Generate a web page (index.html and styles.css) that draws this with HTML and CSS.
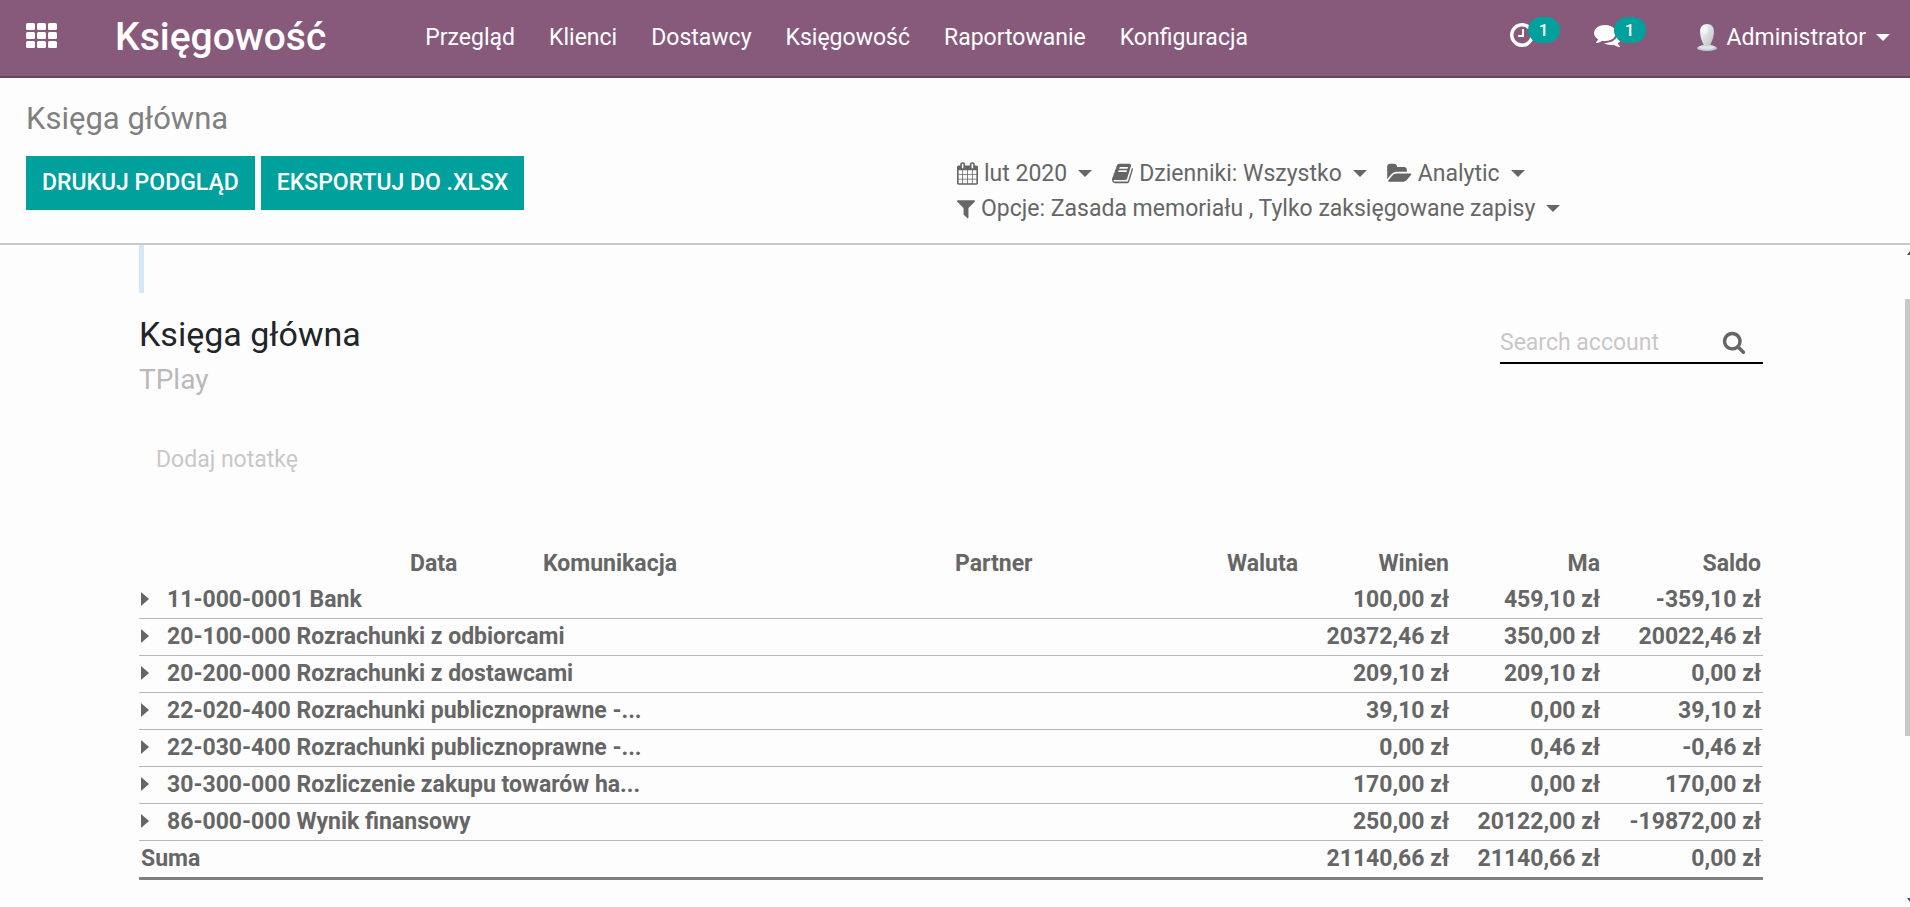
FILE: index.html
```html
<!DOCTYPE html>
<html lang="pl">
<head>
<meta charset="utf-8">
<title>Księga główna</title>
<link rel="stylesheet" href="styles.css">
</head>
<body>
<header class="navbar">
  <button class="apps" type="button" aria-label="Aplikacje">
    <svg width="32" height="32" viewBox="0 0 32 32" fill="currentColor" aria-hidden="true">
      <rect x="0" y="2" width="9" height="7" rx="1.5"/><rect x="11" y="2" width="9" height="7" rx="1.5"/><rect x="22" y="2" width="9" height="7" rx="1.5"/>
      <rect x="0" y="11" width="9" height="7" rx="1.5"/><rect x="11" y="11" width="9" height="7" rx="1.5"/><rect x="22" y="11" width="9" height="7" rx="1.5"/>
      <rect x="0" y="20" width="9" height="7" rx="1.5"/><rect x="11" y="20" width="9" height="7" rx="1.5"/><rect x="22" y="20" width="9" height="7" rx="1.5"/>
    </svg>
  </button>
  <a class="brand" href="#">Księgowość</a>
  <nav class="menu">
    <a href="#">Przegląd</a>
    <a href="#">Klienci</a>
    <a href="#">Dostawcy</a>
    <a href="#">Księgowość</a>
    <a href="#">Raportowanie</a>
    <a href="#">Konfiguracja</a>
  </nav>
  <div class="systray">
    <button class="tray" type="button" aria-label="Aktywności">
      <svg width="28" height="28" viewBox="0 0 1792 1792" fill="currentColor" aria-hidden="true"><path d="M1024 544v448q0 14-9 23t-23 9h-320q-14 0-23-9t-9-23v-64q0-14 9-23t23-9h224v-352q0-14 9-23t23-9h64q14 0 23 9t9 23zm416 352q0-148-73-273t-198-198-273-73-273 73-198 198-73 273 73 273 198 198 273 73 273-73 198-198 73-273zm224 0q0 209-103 385.5t-279.5 279.5-385.5 103-385.5-103-279.5-279.5-103-385.5 103-385.5 279.5-279.5 385.5-103 385.5 103 279.5 279.5 103 385.5z"/></svg>
      <span class="badge">1</span>
    </button>
    <button class="tray" type="button" aria-label="Wiadomości">
      <svg width="28" height="28" viewBox="0 0 1792 1792" fill="currentColor" aria-hidden="true"><path d="M1408 768q0 139-94 257t-256.5 186.5-353.5 68.5q-86 0-176-16-124 88-278 128-36 9-86 16h-3q-11 0-20.5-8t-11.5-21q-1-3-1-6.5t.5-6.5 2-6l2.5-5 3.5-5.5 4-5 4.5-5 4-4.5q5-6 23-25t26-29.5 22.5-29 25-38.5 20.5-44q-124-72-195-177t-71-224q0-139 94-257t256.5-186.5 353.5-68.5 353.5 68.5 256.5 186.5 94 257zm384 256q0 120-71 224.5t-195 176.5q10 24 20.5 44t25 38.5 22.5 29 26 29.5 23 25q1 1 4 4.5t4.5 5 4 5 3.5 5.5l2.5 5 2 6 .5 6.5-1 6.5q-3 14-13 22t-22 7q-50-7-86-16-154-40-278-128-90 16-176 16-271 0-472-132 58 4 88 4 161 0 309-45t264-129q125-92 192-212t67-254q0-77-23-152 129 71 204 178t75 230z"/></svg>
      <span class="badge">1</span>
    </button>
    <button class="user" type="button">
      <svg width="20" height="28" viewBox="0 0 20 28" aria-hidden="true">
        <defs>
          <linearGradient id="head" x1="0" y1="0" x2="1" y2="1"><stop offset="0" stop-color="#fafafa"/><stop offset="0.5" stop-color="#dcdfe2"/><stop offset="1" stop-color="#b9b9b9"/></linearGradient>
        </defs>
        <ellipse cx="10" cy="25" rx="10" ry="3" fill="#c3cdd2"/>
        <ellipse cx="10" cy="24" rx="8" ry="2" fill="#dde3e6"/>
        <path d="M10 1C14.500 1 17 4 17 8.500C17 13 15.500 17 14 20.500C13 24 7 24 6 20.500C4.500 17 3 13 3 8.500C3 4 5.500 1 10 1z" fill="url(#head)"/>
        <ellipse cx="8" cy="7" rx="3" ry="4" fill="#fff" opacity="0.600"/>
      </svg>
      <span>Administrator</span>
      <span class="caret"></span>
    </button>
  </div>
</header>

<section class="control-panel">
  <h1 class="breadcrumb">Księga główna</h1>
  <div class="actions">
    <div class="buttons">
      <button class="btn" type="button">DRUKUJ PODGLĄD</button>
      <button class="btn" type="button">EKSPORTUJ DO .XLSX</button>
    </div>
    <div class="filters">
      <button class="filter" type="button">
        <svg width="21" height="23" viewBox="64 0 1664 1792" fill="currentColor" aria-hidden="true"><path d="M192 1664h288v-288h-288v288zm352 0h320v-288h-320v288zm-352-352h288v-320h-288v320zm352 0h320v-320h-320v320zm-352-384h288v-288h-288v288zm736 736h320v-288h-320v288zm-384-736h320v-288h-320v288zm768 736h288v-288h-288v288zm-384-352h320v-320h-320v320zm-352-864v-288q0-13-9.500-22.500t-22.500-9.500h-64q-13 0-22.500 9.500t-9.500 22.500v288q0 13 9.500 22.500t22.500 9.500h64q13 0 22.500-9.500t9.500-22.500zm736 864h288v-320h-288v320zm-384-384h320v-288h-320v288zm384 0h288v-288h-288v288zm32-480v-288q0-13-9.500-22.500t-22.500-9.500h-64q-13 0-22.500 9.500t-9.500 22.500v288q0 13 9.500 22.500t22.500 9.500h64q13 0 22.500-9.500t9.500-22.500zm384-64v1280q0 52-38 90t-90 38h-1408q-52 0-90-38t-38-90v-1280q0-52 38-90t90-38h128v-96q0-66 47-113t113-47h64q66 0 113 47t47 113v96h384v-96q0-66 47-113t113-47h64q66 0 113 47t47 113v96h128q52 0 90 38t38 90z"/></svg>
        <span>lut 2020</span><span class="caret"></span>
      </button>
      <button class="filter" type="button">
        <svg width="21" height="23" viewBox="64 0 1664 1792" fill="currentColor" aria-hidden="true"><path d="M1703 478q40 57 18 129l-275 906q-19 64-76.500 107.500t-122.500 43.500h-923q-77 0-148.500-53.500t-99.500-131.500q-24-67-2-127 0-4 3-27t4-37q1-8-3-21.500t-3-19.500q2-11 8-21t16.500-23.500 16.500-23.500q23-38 45-91.500t30-91.500q3-10 .5-30t-.5-28q3-11 17-28t17-23q21-36 42-92t25-90q1-9-2.500-32t.5-28q4-13 22-30.500t22-22.500q19-26 42.500-84.500t27.500-96.500q1-8-3-25.500t-2-26.500q2-8 9-18t18-23 17-21q8-12 16.500-30.500t15-35 16-36 19.500-32 26.500-23.500 36-11.500 47.500 5.500l-1 3q38-9 51-9h761q74 0 114 56t18 130l-274 906q-36 119-71.500 153.500t-128.500 34.500h-869q-27 0-38 15-11 16-1 43 24 70 144 70h923q29 0 56-15.500t35-41.500l300-987q7-22 5-57 38 15 59 43zm-1064 2q-4 13 2 22.500t20 9.500h608q13 0 25.500-9.500t16.500-22.500l21-64q4-13-2-22.500t-20-9.500h-608q-13 0-25.500 9.500t-16.500 22.500zm-83 256q-4 13 2 22.500t20 9.500h608q13 0 25.500-9.500t16.500-22.500l21-64q4-13-2-22.500t-20-9.500h-608q-13 0-25.500 9.500t-16.500 22.500z"/></svg>
        <span>Dzienniki: Wszystko</span><span class="caret"></span>
      </button>
      <button class="filter" type="button">
        <svg width="25" height="23" viewBox="0 0 1920 1792" fill="currentColor" aria-hidden="true"><path d="M1879 952q0 31-31 66l-336 396q-43 51-120.500 86.500t-143.500 35.500h-1088q-34 0-60.500-13t-26.500-43q0-31 31-66l336-396q43-51 120.500-86.500t143.500-35.500h1088q34 0 60.500 13t26.500 43zm-343-344v160h-832q-94 0-197 47.500t-164 119.500l-337 396-5 6q0-4-.5-12.500t-.5-12.500v-960q0-92 66-158t158-66h320q92 0 158 66t66 158v32h544q92 0 158 66t66 158z"/></svg>
        <span>Analytic</span><span class="caret"></span>
      </button>
      <button class="filter" type="button">
        <svg width="18" height="23" viewBox="192 0 1408 1792" fill="currentColor" aria-hidden="true"><path d="M1595 295q17 41-14 70l-493 493v742q0 42-39 59-13 5-25 5-27 0-45-19l-256-256q-19-19-19-45v-486l-493-493q-31-29-14-70 17-39 59-39h1280q42 0 59 39z"/></svg>
        <span>Opcje: Zasada memoriału , Tylko zaksięgowane zapisy</span><span class="caret"></span>
      </button>
    </div>
  </div>
</section>

<div class="content">
  <main class="report">
    <div class="summary-mark"></div>
    <div class="report-head">
      <div>
        <h2 class="report-title">Księga główna</h2>
        <h3 class="company">TPlay</h3>
      </div>
      <div class="search">
        <input class="search-input" type="text" placeholder="Search account" aria-label="Search account">
        <svg width="24" height="24" viewBox="0 0 1792 1792" fill="currentColor" aria-hidden="true"><path d="M1216 832q0-185-131.500-316.500t-316.500-131.500-316.500 131.500-131.500 316.500 131.500 316.500 316.500 131.500 316.500-131.500 131.500-316.500zm512 832q0 52-38 90t-90 38q-54 0-90-38l-343-342q-179 124-399 124-143 0-273.500-55.500t-225-150-150-225-55.500-273.500 55.500-273.500 150-225 225-150 273.500-55.500 273.500 55.500 225 150 150 225 55.500 273.500q0 220-124 399l343 343q37 37 37 90z"/></svg>
      </div>
    </div>
    <button class="note" type="button">Dodaj notatkę</button>
    <table class="ledger">
      <colgroup>
        <col class="c-name"><col class="c-date"><col class="c-comm"><col class="c-partner"><col class="c-currency"><col class="c-amount"><col class="c-amount"><col class="c-balance">
      </colgroup>
      <thead>
        <tr><td></td><th scope="col">Data</th><th scope="col">Komunikacja</th><th scope="col">Partner</th><th scope="col" class="num">Waluta</th><th scope="col" class="num">Winien</th><th scope="col" class="num">Ma</th><th scope="col" class="num">Saldo</th></tr>
      </thead>
      <tbody>
        <tr><th scope="row" colspan="5"><span class="unfold"></span>11-000-0001 Bank</th><td class="num">100,00 zł</td><td class="num">459,10 zł</td><td class="num">-359,10 zł</td></tr>
        <tr><th scope="row" colspan="5"><span class="unfold"></span>20-100-000 Rozrachunki z odbiorcami</th><td class="num">20372,46 zł</td><td class="num">350,00 zł</td><td class="num">20022,46 zł</td></tr>
        <tr><th scope="row" colspan="5"><span class="unfold"></span>20-200-000 Rozrachunki z dostawcami</th><td class="num">209,10 zł</td><td class="num">209,10 zł</td><td class="num">0,00 zł</td></tr>
        <tr><th scope="row" colspan="5"><span class="unfold"></span>22-020-400 Rozrachunki publicznoprawne -...</th><td class="num">39,10 zł</td><td class="num">0,00 zł</td><td class="num">39,10 zł</td></tr>
        <tr><th scope="row" colspan="5"><span class="unfold"></span>22-030-400 Rozrachunki publicznoprawne -...</th><td class="num">0,00 zł</td><td class="num">0,46 zł</td><td class="num">-0,46 zł</td></tr>
        <tr><th scope="row" colspan="5"><span class="unfold"></span>30-300-000 Rozliczenie zakupu towarów ha...</th><td class="num">170,00 zł</td><td class="num">0,00 zł</td><td class="num">170,00 zł</td></tr>
        <tr><th scope="row" colspan="5"><span class="unfold"></span>86-000-000 Wynik finansowy</th><td class="num">250,00 zł</td><td class="num">20122,00 zł</td><td class="num">-19872,00 zł</td></tr>
      </tbody>
      <tfoot>
        <tr><th scope="row" colspan="5">Suma</th><td class="num">21140,66 zł</td><td class="num">21140,66 zł</td><td class="num">0,00 zł</td></tr>
      </tfoot>
    </table>
  </main>
  <div class="scrollbar" aria-hidden="true">
    <svg class="arrow" width="5" height="4" viewBox="0 0 5 4"><path d="M2 4L5 0V4z" fill="#505050"/></svg>
    <div class="track"><div class="thumb"></div></div>
    <svg class="arrow" width="5" height="4" viewBox="0 0 5 4"><path d="M2 0H5V4z" fill="#505050"/></svg>
  </div>
</div>
</body>
</html>
```
FILE: styles.css
```css
* {
  box-sizing: border-box;
}

body {
  margin: 0;
  height: 100vh;
  display: flex;
  flex-direction: column;
  overflow: hidden;
  background: #fdfdfd;
  color: #666;
  font-family: Roboto, "Liberation Sans", sans-serif;
  font-size: 23px;
  line-height: 35px;
}

button,
input {
  margin: 0;
  padding: 0;
  border: 0;
  background: none;
  color: inherit;
  font: inherit;
}

a {
  color: inherit;
  text-decoration: none;
}

svg {
  display: block;
  flex: none;
}

h1,
h2,
h3 {
  margin: 0;
  font-weight: 400;
}

.navbar {
  flex: none;
  display: flex;
  align-items: center;
  height: 78px;
  padding: 0 20px 2px 26px;
  background: #875a7b;
  border-bottom: 2px solid #68465f;
  color: #fff;
}

.apps {
  width: 32px;
}

.brand {
  margin-left: 57px;
  font-size: 39px;
  font-weight: 500;
}

.menu {
  display: flex;
  gap: 34px;
  margin-left: 99px;
}

.systray {
  display: flex;
  align-items: center;
  margin-left: auto;
}

.tray {
  position: relative;
  width: 52px;
  margin-right: 34px;
  padding-bottom: 4px;
}

.tray + .user {
  margin-left: 17px;
}

.badge {
  position: absolute;
  top: -4px;
  right: 0;
  width: 32px;
  height: 26px;
  border-radius: 13px;
  background: #00a09d;
  font-size: 17px;
  font-weight: 500;
  line-height: 26px;
  text-align: center;
}

.user {
  display: flex;
  align-items: center;
  gap: 10px;
}

.caret {
  border: 7px solid transparent;
  border-top-color: currentColor;
  border-bottom: 0;
}

.control-panel {
  flex: none;
  padding: 21px 26px 17px;
  border-bottom: 2px solid #c8c8c8;
}

.breadcrumb {
  color: #808080;
  font-size: 31px;
  line-height: 40px;
}

.actions {
  display: grid;
  grid-template-columns: 1fr 1fr;
  margin-top: 11px;
}

.buttons {
  display: flex;
  gap: 6px;
  margin: 6px 0 8px;
}

.btn {
  height: 54px;
  padding: 0 16px 2px;
  background: #00a09d;
  color: #fff;
  font-weight: 500;
}

.filters {
  display: flex;
  flex-wrap: wrap;
  align-content: flex-start;
  column-gap: 20px;
  margin-top: 6px;
  padding-left: 2px;
}

.filter {
  display: flex;
  align-items: center;
  gap: 6px;
}

.filter .caret {
  margin-left: 5px;
}

.content {
  flex: 1;
  display: flex;
  min-height: 0;
}

.report {
  flex: 1;
  padding: 0 142px 0 139px;
}

.summary-mark {
  width: 5px;
  height: 48px;
  background: #d1e8f8;
}

.report-head {
  display: flex;
  justify-content: space-between;
  align-items: flex-start;
  padding-top: 20px;
}

.report-title {
  color: #212529;
  font-size: 34px;
  line-height: 42px;
}

.company {
  margin-top: 7px;
  color: #b9b9bb;
  font-size: 28px;
}

.search {
  display: flex;
  align-items: center;
  width: 263px;
  margin-top: 10px;
  padding: 0 17px 2px 0;
  border-bottom: 2px solid #000;
}

.search-input {
  flex: 1;
  min-width: 0;
  height: 37px;
  padding-top: 2px;
  outline: 0;
}

.search-input::placeholder {
  color: #c8c8c8;
  opacity: 1;
}

.note {
  display: block;
  margin: 45px 0 0 17px;
  color: #c8c8c8;
}

.ledger {
  width: 100%;
  margin-top: 69px;
  border-collapse: collapse;
  table-layout: fixed;
  font-weight: 700;
  line-height: 36px;
}

.ledger th,
.ledger td {
  padding: 0 2px;
  border-bottom: 1px solid #b8b8b8;
  text-align: left;
  white-space: nowrap;
}

.ledger thead th,
.ledger thead td {
  border-bottom: 0;
}

.ledger tfoot th,
.ledger tfoot td {
  border-bottom: 3px solid #808080;
}

.ledger .num {
  text-align: right;
}

.c-name {
  width: 269px;
}

.c-date {
  width: 133px;
}

.c-partner {
  width: 228px;
}

.c-currency {
  width: 119px;
}

.c-amount {
  width: 151px;
}

.c-balance {
  width: 161px;
}

.unfold {
  display: inline-block;
  margin-right: 18px;
  border: 7px solid transparent;
  border-left: 8px solid currentColor;
  border-right: 0;
  vertical-align: 1px;
}

.scrollbar {
  flex: none;
  display: flex;
  flex-direction: column;
  width: 5px;
  padding: 6px 0 5px;
}

.track {
  flex: 1;
  padding-top: 44px;
}

.thumb {
  height: 73%;
  background: #c8c8c8;
}
```
